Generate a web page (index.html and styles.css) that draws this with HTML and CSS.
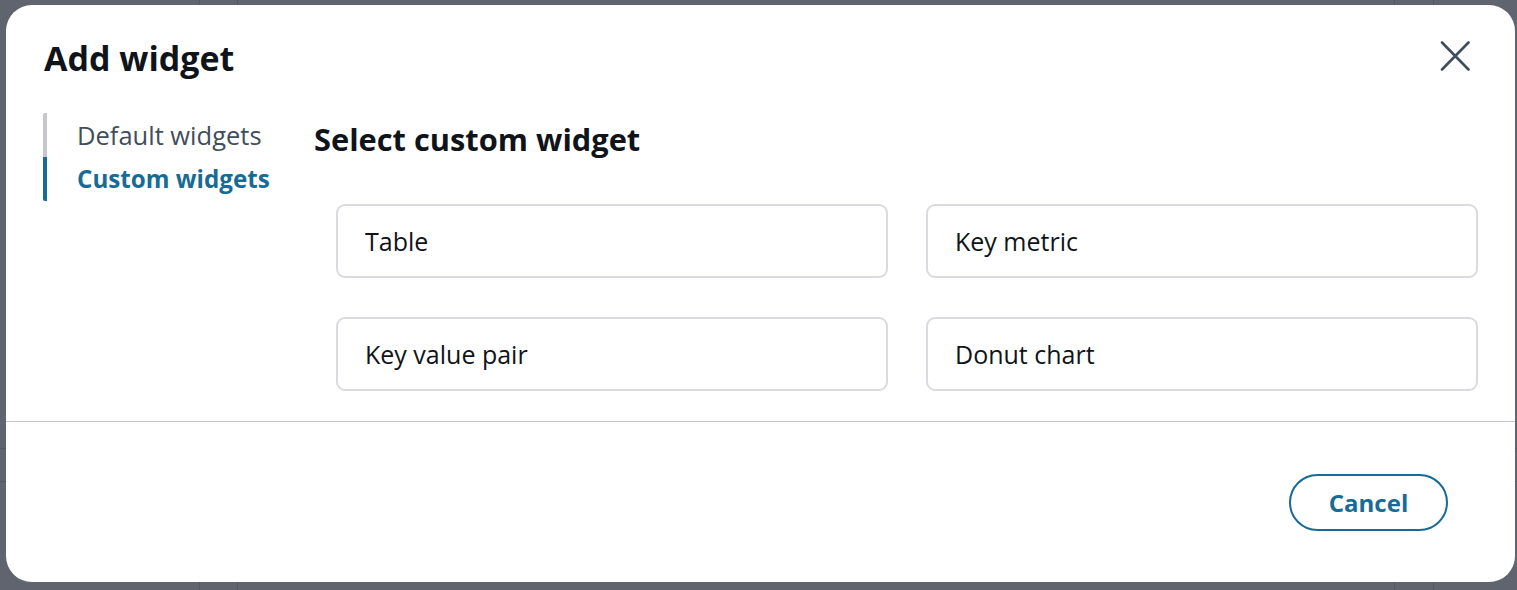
FILE: index.html
```html
<!DOCTYPE html>
<html lang="en">
<head>
<meta charset="utf-8">
<title>Add widget</title>
<link rel="stylesheet" href="styles.css">
</head>
<body>
<div class="backdrop">
  <div class="modal" role="dialog" aria-label="Add widget">
    <div class="modal-header">
      <h2 class="modal-title">Add widget</h2>
      <button class="close-btn" aria-label="Close">
        <svg width="30" height="30" viewBox="0 0 30 30" aria-hidden="true">
          <path d="M2 1.5 L28.5 28.5 M28.5 1.5 L2 28.5" stroke="#414d5c" stroke-width="2.6" stroke-linecap="round" fill="none"/>
        </svg>
      </button>
    </div>
    <div class="modal-body">
      <nav class="side-nav">
        <a class="nav-item">Default widgets</a>
        <a class="nav-item active">Custom widgets</a>
      </nav>
      <section class="content">
        <h3 class="content-title">Select custom widget</h3>
        <div class="card-grid">
          <div class="card">Table</div>
          <div class="card">Key metric</div>
          <div class="card">Key value pair</div>
          <div class="card">Donut chart</div>
        </div>
      </section>
    </div>
    <div class="modal-footer">
      <button class="btn-cancel">Cancel</button>
    </div>
  </div>
</div>
</body>
</html>
```
FILE: styles.css
```css
html, body {
  margin: 0;
  padding: 0;
}
body {
  width: 1517px;
  height: 590px;
  overflow: hidden;
  font-family: "Open Sans", "Noto Sans", sans-serif;
  background-color: #5f646e;
  background-image:
    linear-gradient(to right, transparent 199px, #545862 199px, #545862 200px, transparent 200px,
      transparent 237px, #545862 237px, #545862 238px, transparent 238px,
      transparent 1394px, #545862 1394px, #545862 1395px, transparent 1395px,
      transparent 1433px, #545862 1433px, #545862 1434px, transparent 1434px),
    linear-gradient(to bottom, transparent 448px, #545862 448px, #545862 449px, transparent 449px,
      transparent 481px, #545862 481px, #545862 482px, transparent 482px);
}
.backdrop {
  padding: 5px 2px 0 6px;
}
.modal {
  background: #ffffff;
  border-radius: 26px;
  display: flex;
  flex-direction: column;
  width: 1509px;
  overflow: hidden;
}
.modal-header {
  display: flex;
  justify-content: space-between;
  align-items: flex-start;
  padding: 33px 45px 0 38px;
}
.modal-title {
  margin: 0;
  font-size: 34px;
  line-height: 40px;
  font-weight: 700;
  color: #0f141a;
}
.close-btn {
  margin-top: 3px;
  padding: 0;
  border: 0;
  background: none;
  width: 30px;
  height: 30px;
  display: flex;
  cursor: pointer;
}
.modal-body {
  display: flex;
  padding: 35px 37px 30px 37px;
  border-bottom: 1px solid #c6c6cd;
}
.side-nav {
  width: 271px;
  flex: none;
  display: flex;
  flex-direction: column;
  align-self: flex-start;
}
.nav-item {
  display: block;
  height: 44px;
  line-height: 44px;
  font-size: 25.5px;
  color: #414d5c;
  padding-left: 30px;
  border-left: 4px solid #c6c6cd;
  box-sizing: border-box;
  white-space: nowrap;
}
.nav-item.active {
  color: #176b96;
  font-weight: 700;
  font-size: 24.2px;
  border-left-color: #176b96;
}
.nav-item:first-child {
  border-top-left-radius: 2px;
}
.nav-item:last-child {
  border-bottom-left-radius: 2px;
}
.content {
  flex: 1;
  padding-top: 8px;
}
.content-title {
  margin: 0 0 47px 0;
  font-size: 30.8px;
  line-height: 36px;
  font-weight: 700;
  color: #0f141a;
}
.card-grid {
  margin-left: 22px;
  display: grid;
  grid-template-columns: 1fr 1fr;
  column-gap: 38px;
  row-gap: 39px;
}
.card {
  border: 2px solid #d9dbe0;
  border-radius: 9px;
  height: 70px;
  line-height: 70px;
  padding-left: 27px;
  font-size: 25px;
  color: #0f141a;
}
.modal-footer {
  display: flex;
  justify-content: flex-end;
  padding: 52px 67px 51px 0;
}
.btn-cancel {
  width: 159px;
  height: 57px;
  border: 2px solid #176b96;
  border-radius: 29px;
  background: #fff;
  color: #176b96;
  font-family: "Open Sans", "Noto Sans", sans-serif;
  font-size: 24px;
  font-weight: 700;
  padding: 0;
  cursor: pointer;
}
```
